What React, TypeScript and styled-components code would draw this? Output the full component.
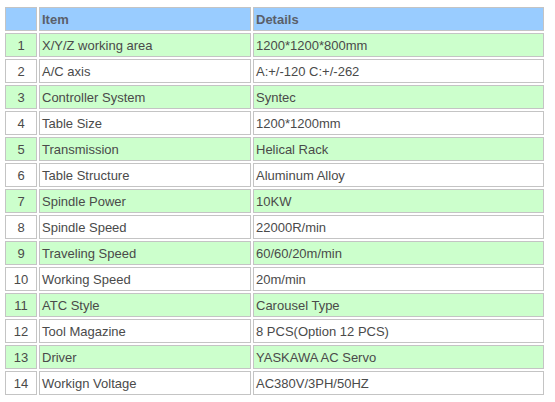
import React from "react";
import styled, { createGlobalStyle } from "styled-components";

const Global = createGlobalStyle`
  html, body { margin: 0; padding: 0; background: #ffffff; }
  body { font-family: "Liberation Sans", Arial, sans-serif; }
`;

const Wrap = styled.div`
  padding: 5px 0 0 3px;
`;

const Table = styled.table`
  border-collapse: separate;
  border-spacing: 2px;
  table-layout: fixed;
  width: 543px;
  font-family: "Liberation Sans", Arial, sans-serif;
  font-size: 13px;
  color: #4a4a4a;
`;

const HeadCell = styled.th<{ $w: number }>`
  box-sizing: border-box;
  width: ${(p) => p.$w}px;
  height: 24px;
  padding: 0 2px;
  border: 1px solid #c4c4c4;
  background: #99ccff;
  color: #5a5f6a;
  font-weight: bold;
  text-align: left;
`;

const Cell = styled.td<{ $alt: boolean; $center?: boolean }>`
  box-sizing: border-box;
  height: 24px;
  padding: 0 2px;
  border: 1px solid #c4c4c4;
  background: ${(p) => (p.$alt ? "#ccffcc" : "#ffffff")};
  text-align: ${(p) => (p.$center ? "center" : "left")};
  white-space: nowrap;
  vertical-align: middle;
`;

const rows: [string, string][] = [
  ["X/Y/Z working area", "1200*1200*800mm"],
  ["A/C axis", "A:+/-120 C:+/-262"],
  ["Controller System", "Syntec"],
  ["Table Size", "1200*1200mm"],
  ["Transmission", "Helical Rack"],
  ["Table Structure", "Aluminum Alloy"],
  ["Spindle Power", "10KW"],
  ["Spindle Speed", "22000R/min"],
  ["Traveling Speed", "60/60/20m/min"],
  ["Working Speed", "20m/min"],
  ["ATC Style", "Carousel Type"],
  ["Tool Magazine", "8 PCS(Option 12 PCS)"],
  ["Driver", "YASKAWA AC Servo"],
  ["Workign Voltage", "AC380V/3PH/50HZ"],
];

export default function App() {
  return (
    <>
      <Global />
      <Wrap>
        <Table>
          <thead>
            <tr>
              <HeadCell $w={32}></HeadCell>
              <HeadCell $w={212}>Item</HeadCell>
              <HeadCell $w={291}>Details</HeadCell>
            </tr>
          </thead>
          <tbody>
            {rows.map(([item, detail], i) => {
              const alt = i % 2 === 0;
              return (
                <tr key={i}>
                  <Cell $alt={alt} $center>
                    {i + 1}
                  </Cell>
                  <Cell $alt={alt}>{item}</Cell>
                  <Cell $alt={alt}>{detail}</Cell>
                </tr>
              );
            })}
          </tbody>
        </Table>
      </Wrap>
    </>
  );
}
